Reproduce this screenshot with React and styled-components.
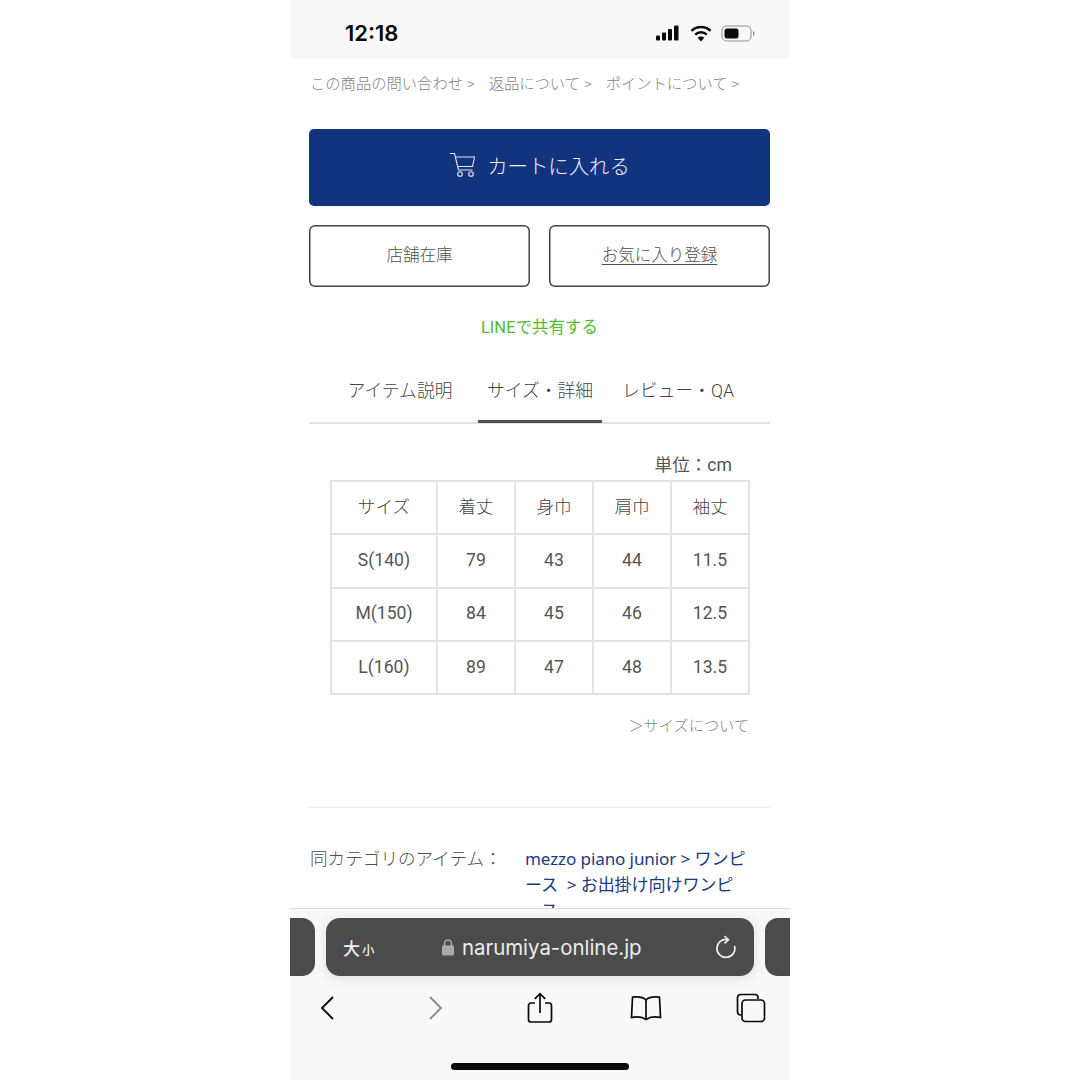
import React from "react";
import styled, { createGlobalStyle } from "styled-components";

const jp = `Roboto, "Noto Sans CJK JP", "Noto Sans", sans-serif`;
const G = createGlobalStyle`
  html, body { margin: 0; padding: 0; background: #fff; }
  body { width: 1080px; height: 1080px; overflow: hidden; font-family: ${jp}; }
`;
const Phone = styled.div`
  width: 500px; height: 1080px; margin-left: 290px; background: #fff;
  display: flex; flex-direction: column; overflow: hidden;
`;
const StatusBar = styled.div`
  height: 59px; flex: none; background: #f8f8f8; display: flex; align-items: center;
  padding: 7px 34px 0 55px; box-sizing: border-box; justify-content: space-between;
`;
const Clock = styled.span`
  font: 600 22px/24px Inter, sans-serif; color: #0a0a0a;
`;
const StatusIcons = styled.div`display: flex; align-items: center; gap: 9px;`;
const Content = styled.div`
  flex: 1; min-height: 0; padding: 0 20px 0 19px; overflow: hidden; display: flex; flex-direction: column;
`;
const TopLinks = styled.div`
  display: flex; gap: 14px; height: 24px; margin-top: 11px; align-items: center; flex: none;
  font-size: 15.3px; font-weight: 300; color: #858585; white-space: nowrap; padding-left: 1px;
`;
const CartButton = styled.div`
  margin-top: 35px; height: 77px; padding-bottom: 5px; box-sizing: border-box; background: #12347f; border-radius: 5px; color: #f0f2f8;
  display: flex; align-items: center; justify-content: center; gap: 11px; font-size: 20.4px; font-weight: 300; flex: none;
`;
const ButtonRow = styled.div`display: flex; gap: 19px; margin-top: 19px; flex: none;`;
const OutlineButton = styled.div`
  flex: 1; height: 62px; padding-bottom: 4px; box-sizing: border-box; box-shadow: inset 0 0 0 1.5px #444; border-radius: 6px; color: #4f4f4f;
  display: flex; align-items: center; justify-content: center; font-size: 16.5px; font-weight: 300;
  text-decoration: ${p => (p.$u ? "underline" : "none")}; text-underline-offset: 3px;
`;
const LineLink = styled.div`
  margin-top: 29px; height: 24px; line-height: 24px; text-align: center; color: #52bb33; font-size: 16.5px; flex: none;
`;
const Tabs = styled.div`
  margin-top: 30px; height: 52px; flex: none; border-bottom: 2px solid #e3e3e3; display: flex;
  justify-content: center; padding-right: 3px;
`;
const Tab = styled.div`
  width: ${p => p.$w}px; flex: none; box-sizing: border-box; text-align: center; font-size: 17.8px; font-weight: 300; line-height: 26px;
  color: #444; padding-top: 8px; height: 53px; border-bottom: 3px solid ${p => (p.$on ? "#4f4f4f" : "transparent")}; white-space: nowrap;
`;
const Unit = styled.div`
  margin-top: 28px; height: 26px; line-height: 26px; text-align: right; font-size: 17.6px; color: #555; padding-right: 38px; flex: none;
`;
const Table = styled.table`
  border-collapse: collapse; width: 420px; margin-left: 21px; margin-top: 2px; table-layout: fixed; flex: none;
  td { border: 2px solid #e2e2e2; height: 53.3px; padding: 0 0 2px; box-sizing: border-box; text-align: center; font-size: 17.6px; color: #555; }
  tr:first-child td { padding-bottom: 4px; font-weight: 300; color: #444; }
`;
const SizeNote = styled.div`
  margin-top: 19px; height: 24px; line-height: 24px; text-align: right; font-size: 15.2px; font-weight: 300; color: #858585; padding-right: 21px; flex: none;
`;
const Divider = styled.div`margin-top: 69px; height: 1px; background: #ececec; flex: none;`;
const Category = styled.div`display: flex; margin-top: 38px; flex: none;`;
const CatLabel = styled.div`width: 216px; flex: none; font-size: 17.6px; font-weight: 300; line-height: 26px; color: #4f4f4f; padding-left: 1px; box-sizing: border-box; white-space: nowrap;`;
const CatLink = styled.div`font-family: "Noto Sans", "Noto Sans CJK JP", sans-serif; font-size: 17.1px; letter-spacing: -0.13px; line-height: 26px; color: #1b3a80; white-space: nowrap;`;
const Bottom = styled.div`
  flex: none; height: 172px; background: #f8f8f8; border-top: 1px solid #dcdcdc; box-sizing: border-box;
  position: relative; display: flex; flex-direction: column;
`;
const TabStrip = styled.div`display: flex; gap: 11px; margin: 9px -25px 0; flex: none;`;
const SidePill = styled.div`width: 50px; height: 58px; background: #4b4b4b; border-radius: 13px; flex: none;`;
const UrlPill = styled.div`
  flex: 1; height: 58px; background: #4b4b4b; border-radius: 14px; color: #f0f0f0; display: flex; align-items: center;
  padding: 0 17px; box-shadow: 0 2px 12px rgba(0,0,0,.10); box-sizing: border-box;
`;
const Aa = styled.span`font-size: 17px; font-weight: 500; width: 98px; flex: none; small { font-size: 12.5px; margin-left: 2px; }`;
const Domain = styled.span`font: 400 20.4px/28px Inter, sans-serif; margin-left: 7px; padding-top: 2px; flex: 1; color: #ececec;`;
const Nav = styled.div`
  display: grid; grid-template-columns: 109px 104px 106px 105px 34px; align-items: center; padding-left: 20px; margin-top: 14px; flex: none;
`;
const NavSlot = styled.div`width: 34px; height: 36px; display: flex; align-items: center; justify-content: center;`;
const HomeBar = styled.div`
  position: absolute; left: 161px; bottom: 10px; width: 178px; height: 7px; border-radius: 4px; background: #0a0a0a;
`;

const rows = [
  ["サイズ", "着丈", "身巾", "肩巾", "袖丈"],
  ["S(140)", "79", "43", "44", "11.5"],
  ["M(150)", "84", "45", "46", "12.5"],
  ["L(160)", "89", "47", "48", "13.5"],
];

export default function App() {
  return (
    <>
      <G />
      <Phone>
        <StatusBar>
          <Clock>12:18</Clock>
          <StatusIcons>
            <svg width="26" height="16" viewBox="0 0 26 16" fill="#0a0a0a">
              <rect x="1" y="10.500" width="4" height="5" rx="1" /><rect x="7" y="7.500" width="4" height="8" rx="1" />
              <rect x="13" y="4" width="4" height="11.500" rx="1" /><rect x="19" y="0.500" width="4.500" height="15" rx="1" />
            </svg>
            <svg width="22" height="17" viewBox="0 0 22 17" fill="none" stroke="#0a0a0a" strokeWidth="2.500">
              <path d="M1.500 5.800C7 .8 15 .8 20.500 5.800" /><path d="M5.200 9.600c3.200-3 8.400-3 11.600 0" />
              <path d="M11 16.500l-3.400-3.700c1.900-1.600 4.900-1.600 6.800 0z" fill="#0a0a0a" stroke="none" />
            </svg>
            <svg width="35" height="17" viewBox="0 0 35 17" fill="none">
              <rect x="1" y="1" width="29" height="15" rx="4.500" stroke="#8e8e8e" />
              <rect x="3.500" y="3.500" width="14" height="10" rx="2.500" fill="#0a0a0a" />
              <path d="M32 6v5c1-.4 1.500-1.400 1.500-2.500S33 6.400 32 6z" fill="#8e8e8e" />
            </svg>
          </StatusIcons>
        </StatusBar>
        <Content>
          <TopLinks>
            <span>この商品の問い合わせ &gt;</span><span>返品について &gt;</span><span>ポイントについて &gt;</span>
          </TopLinks>
          <CartButton>
            <svg width="27" height="26" viewBox="0 0 27 26" fill="none" stroke="#e6e9f2" strokeWidth="1.100">
              <path d="M1 1.500h4.500l4 16.500h14" /><path d="M6.300 5h19.200l-2 9.500H8.600" />
              <circle cx="11" cy="22" r="2.300" /><circle cx="22" cy="22" r="2.300" />
            </svg>
            <span>カートに入れる</span>
          </CartButton>
          <ButtonRow>
            <OutlineButton>店舗在庫</OutlineButton>
            <OutlineButton $u>お気に入り登録</OutlineButton>
          </ButtonRow>
          <LineLink>LINEで共有する</LineLink>
          <Tabs>
            <Tab $w={156}>アイテム説明</Tab>
            <Tab $w={124} $on>サイズ・詳細</Tab>
            <Tab $w={152}>レビュー・QA</Tab>
          </Tabs>
          <Unit>単位：cm</Unit>
          <Table>
            <colgroup><col style={{ width: 106 }} /><col /><col /><col /><col /></colgroup>
            <tbody>
              {rows.map(r => (
                <tr key={r[0]}>{r.map((c, i) => <td key={i}>{c}</td>)}</tr>
              ))}
            </tbody>
          </Table>
          <SizeNote>＞サイズについて</SizeNote>
          <Divider />
          <Category>
            <CatLabel>同カテゴリのアイテム：</CatLabel>
            <CatLink>mezzo piano junior &gt; ワンピ<br />ース &nbsp;&gt; お出掛け向けワンピ<br />ース</CatLink>
          </Category>
        </Content>
        <Bottom>
          <TabStrip>
            <SidePill />
            <UrlPill>
              <Aa>大<small>小</small></Aa>
              <svg width="14" height="18" viewBox="0 0 14 18" fill="none">
                <path d="M3.500 8V5.500a3.500 3.500 0 0 1 7 0V8" stroke="#a9a9ae" strokeWidth="1.600" />
                <rect x="1" y="7.500" width="12" height="10" rx="1.500" fill="#a9a9ae" />
              </svg>
              <Domain>narumiya-online.jp</Domain>
              <svg width="22" height="24" viewBox="0 0 22 24" fill="none" stroke="#f0f0f0" strokeWidth="1.600">
                <path d="M13 4.600A9 9 0 1 0 19.600 11" /><path d="M9.500 1l4 3.700-4 3.700" />
              </svg>
            </UrlPill>
            <SidePill />
          </TabStrip>
          <Nav>
            <NavSlot>
              <svg width="16" height="26" viewBox="0 0 16 26" fill="none" stroke="#0a0a0a" strokeWidth="1.900"><path d="M14 2L3 13l11 11" /></svg>
            </NavSlot>
            <NavSlot>
              <svg width="16" height="26" viewBox="0 0 16 26" fill="none" stroke="#8a8a8a" strokeWidth="1.900"><path d="M2 2l11 11L2 24" /></svg>
            </NavSlot>
            <NavSlot>
              <svg width="26" height="32" viewBox="0 0 26 32" fill="none" stroke="#0a0a0a" strokeWidth="1.700">
                <path d="M8 11H4a2.500 2.500 0 0 0-2.500 2.500v14A2.500 2.500 0 0 0 4 30h18a2.500 2.500 0 0 0 2.500-2.500v-14A2.500 2.500 0 0 0 22 11h-4" />
                <path d="M13 21V2M7.800 6.800L13 1.600l5.200 5.200" />
              </svg>
            </NavSlot>
            <NavSlot>
              <svg width="32" height="26" viewBox="0 0 32 26" fill="none" stroke="#0a0a0a" strokeWidth="1.700">
                <path d="M16 5C13 2 8 1.500 2.500 2.200L1.500 22.500C7 21.500 12.500 22 16 24.500C19.500 22 25 21.500 30.500 22.500L29.500 2.200C24 1.500 19 2 16 5Z" />
                <path d="M16 5v19.500" />
              </svg>
            </NavSlot>
            <NavSlot>
              <svg width="30" height="30" viewBox="0 0 30 30" fill="none" stroke="#0a0a0a" strokeWidth="1.700">
                <path d="M5 22H4.500A3 3 0 0 1 1.500 19V4.500a3 3 0 0 1 3-3H19a3 3 0 0 1 3 3V6" />
                <rect x="6" y="7" width="22.500" height="21.500" rx="3.500" />
              </svg>
            </NavSlot>
          </Nav>
          <HomeBar />
        </Bottom>
      </Phone>
    </>
  );
}
